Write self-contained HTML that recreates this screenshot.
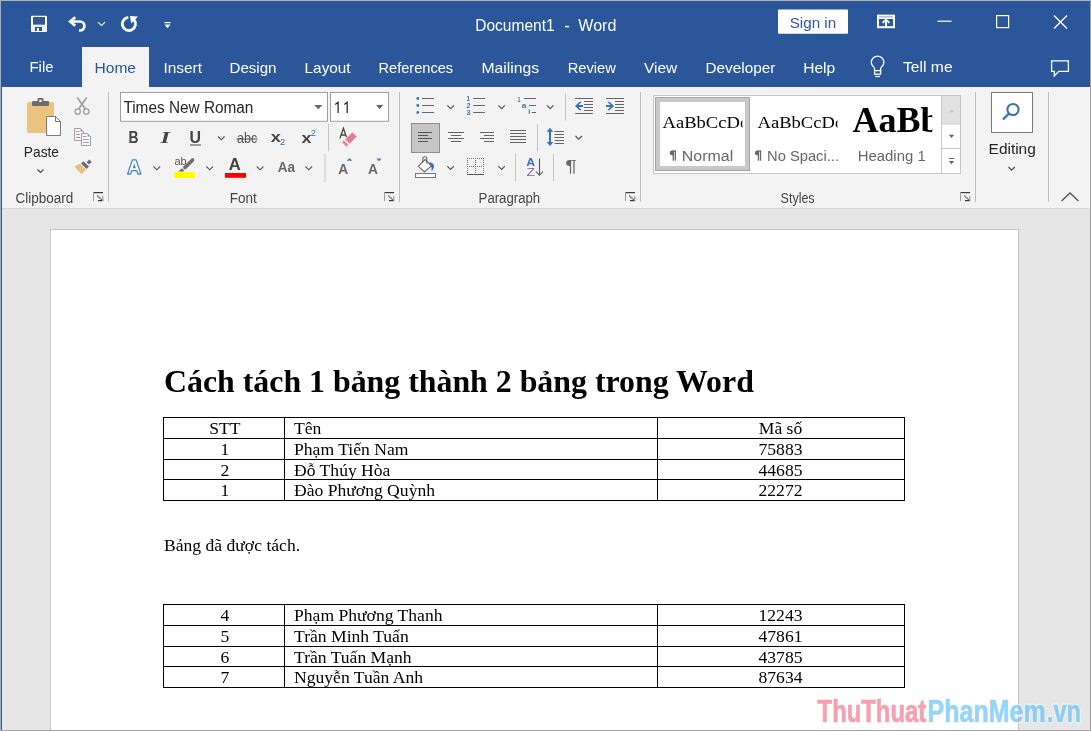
<!DOCTYPE html>
<html><head><meta charset="utf-8">
<style>
html,body{margin:0;padding:0;}
body{width:1091px;height:731px;position:relative;overflow:hidden;background:#e6e6e6;font-family:"Liberation Sans",sans-serif;}
.a{position:absolute;}
svg{position:absolute;left:0;top:0;will-change:transform;}
.ui{font-family:"Liberation Sans",sans-serif;}
.tnr{font-family:"Liberation Serif",serif;}
</style></head><body>
<div class="a" style="left:0;top:0;width:1091px;height:87px;background:#2b579a"></div>
<div class="a" style="left:82px;top:47px;width:67px;height:40px;background:#f3f3f3"></div>
<div class="a" style="left:0;top:87px;width:1091px;height:121px;background:#f3f3f3"></div>
<div class="a" style="left:0;top:208px;width:1091px;height:1px;background:#d6d6d6"></div>
<div class="a" style="left:50px;top:229px;width:967px;height:510px;background:#fff;border:1px solid #c6c6c6"></div>
<svg width="1091" height="731" viewBox="0 0 1091 731">
<!-- ===== TITLE BAR ===== -->
<!-- save -->
<rect x="31" y="15.7" width="16" height="16.3" rx="1" fill="#fff"/>
<rect x="33" y="17" width="12" height="7.8" fill="#2b579a"/>
<rect x="31.8" y="24.8" width="14.4" height="6.4" fill="#f0f0f0"/>
<rect x="35" y="27" width="7" height="4" fill="#2b579a"/>
<rect x="37" y="28" width="2" height="3" fill="#fff"/>
<!-- undo -->
<path d="M75.2 17.2 L70.2 21.5 L75.2 25.8" fill="none" stroke="#fff" stroke-width="2.7"/>
<path d="M70 21.5 H79.9 A4.5 4.5 0 0 1 79.9 30.5 H79" fill="none" stroke="#fff" stroke-width="2.7"/>
<path d="M98 22.2 L101.5 25.6 L105 22.2" fill="none" stroke="#fff" stroke-width="1.1"/>
<!-- redo/repeat -->
<path d="M128.3 17.3 A6.6 6.6 0 1 0 133.96 19.66" fill="none" stroke="#fff" stroke-width="2.8"/>
<path d="M130 15.9 L138 16.6 L131.2 23.6 Z" fill="#fff"/>
<!-- customize -->
<rect x="164.5" y="22" width="6" height="1.2" fill="#fff"/>
<path d="M164.5 24.5 H170.5 L167.5 28.2 Z" fill="#fff"/>
<g fill="#fff" class="ui">
 <text x="475.3" y="31" font-size="15.6" textLength="79.3" lengthAdjust="spacingAndGlyphs">Document1</text>
 <text x="564.2" y="31" font-size="15.6" textLength="5.6" lengthAdjust="spacingAndGlyphs">-</text>
 <text x="578.3" y="31" font-size="15.6" textLength="38" lengthAdjust="spacingAndGlyphs">Word</text>
</g>
<rect x="778" y="9.5" width="70" height="24.3" rx="1" fill="#fff"/>
<text x="789.7" y="28" font-size="15.5" fill="#2b579a" textLength="46.5" lengthAdjust="spacingAndGlyphs" class="ui">Sign in</text>
<!-- ribbon display options -->
<rect x="878" y="15.8" width="16" height="11.4" fill="none" stroke="#fff" stroke-width="2"/>
<rect x="877" y="14.8" width="18" height="4.2" fill="#fff"/>
<rect x="879" y="16.3" width="14" height="1.1" fill="#2b579a" opacity="0.5"/>
<path d="M882.6 22.9 L886 19.5 L889.4 22.9" stroke="#fff" stroke-width="1.7" fill="none"/>
<path d="M886 19.6 V26.8" stroke="#fff" stroke-width="2"/>
<!-- min max close -->
<rect x="937.5" y="20.6" width="14" height="1.2" fill="#fff"/>
<rect x="996.6" y="15.6" width="12" height="12" fill="none" stroke="#fff" stroke-width="1.2"/>
<path d="M1054 15.5 L1067 28.5 M1067 15.5 L1054 28.5" stroke="#fff" stroke-width="1.3"/>

<!-- ===== TABS ===== -->
<g font-size="15" class="ui" fill="#fff">
 <text x="29.5" y="72.2" textLength="24" lengthAdjust="spacingAndGlyphs">File</text>
 <text x="94.5" y="73" textLength="41.5" lengthAdjust="spacingAndGlyphs" fill="#2b579a">Home</text>
 <text x="163.5" y="73" textLength="38.5" lengthAdjust="spacingAndGlyphs">Insert</text>
 <text x="229.5" y="73" textLength="47" lengthAdjust="spacingAndGlyphs">Design</text>
 <text x="304.6" y="73" textLength="46" lengthAdjust="spacingAndGlyphs">Layout</text>
 <text x="378.5" y="73" textLength="74.6" lengthAdjust="spacingAndGlyphs">References</text>
 <text x="481.4" y="73" textLength="57.7" lengthAdjust="spacingAndGlyphs">Mailings</text>
 <text x="567.7" y="73" textLength="48.2" lengthAdjust="spacingAndGlyphs">Review</text>
 <text x="644" y="73" textLength="33.3" lengthAdjust="spacingAndGlyphs">View</text>
 <text x="705.4" y="73" textLength="70" lengthAdjust="spacingAndGlyphs">Developer</text>
 <text x="803.2" y="73" textLength="32" lengthAdjust="spacingAndGlyphs">Help</text>
 <text x="903" y="71.8" textLength="49.6" lengthAdjust="spacingAndGlyphs">Tell me</text>
</g>
<!-- lightbulb -->
<path d="M874.6 70.8 V68.8 C874.6 67.2 871.3 65.6 871.3 62.4 A6.3 6.3 0 0 1 883.9 62.4 C883.9 65.6 880.6 67.2 880.6 68.8 V70.8" fill="none" stroke="#fff" stroke-width="1.3"/>
<rect x="874.6" y="70.6" width="6" height="3.6" fill="none" stroke="#fff" stroke-width="1.3"/>
<rect x="875.3" y="75.9" width="4.6" height="1.2" fill="#fff"/>
<!-- comments -->
<path d="M1051.6 60.8 H1068.4 V71.3 H1058.8 L1054.3 76 V71.3 H1051.6 Z" fill="none" stroke="#fff" stroke-width="1.3"/>
<!-- ===== RIBBON ===== -->
<g fill="#bdbdbd">
 <rect x="108" y="92" width="1" height="110"/>
 <rect x="399" y="92" width="1" height="110"/>
 <rect x="640" y="92" width="1" height="110"/>
 <rect x="975" y="92" width="1" height="110"/>
 <rect x="1048" y="92" width="1" height="110"/>
</g>
<!-- group labels -->
<g font-size="14" class="ui" fill="#444">
 <text x="15.4" y="203" textLength="57.8" lengthAdjust="spacingAndGlyphs">Clipboard</text>
 <text x="229.7" y="203" textLength="27" lengthAdjust="spacingAndGlyphs">Font</text>
 <text x="478.6" y="203" textLength="61.6" lengthAdjust="spacingAndGlyphs">Paragraph</text>
 <text x="780.6" y="203" textLength="34" lengthAdjust="spacingAndGlyphs">Styles</text>
</g>
<!-- launchers -->
<g><rect x="93" y="192" width="10" height="1.2" fill="#3a3a3a"/><rect x="93" y="192" width="1" height="9" fill="#9a9a9a"/>
<path d="M97.3 195.6 L102.3 200.3" stroke="#333" stroke-width="1.2" stroke-dasharray="1.1 0.5"/>
<rect x="98" y="200" width="5" height="1.2" fill="#333"/><rect x="102.2" y="196" width="1.2" height="5" fill="#9a9a9a"/></g>
<g><rect x="384" y="192" width="10" height="1.2" fill="#3a3a3a"/><rect x="384" y="192" width="1" height="9" fill="#9a9a9a"/>
<path d="M388.3 195.6 L393.3 200.3" stroke="#333" stroke-width="1.2" stroke-dasharray="1.1 0.5"/>
<rect x="389" y="200" width="5" height="1.2" fill="#333"/><rect x="393.2" y="196" width="1.2" height="5" fill="#9a9a9a"/></g>
<g><rect x="625" y="192" width="10" height="1.2" fill="#3a3a3a"/><rect x="625" y="192" width="1" height="9" fill="#9a9a9a"/>
<path d="M629.3 195.6 L634.3 200.3" stroke="#333" stroke-width="1.2" stroke-dasharray="1.1 0.5"/>
<rect x="630" y="200" width="5" height="1.2" fill="#333"/><rect x="634.2" y="196" width="1.2" height="5" fill="#9a9a9a"/></g>
<g><rect x="960" y="192" width="10" height="1.2" fill="#3a3a3a"/><rect x="960" y="192" width="1" height="9" fill="#9a9a9a"/>
<path d="M964.3 195.6 L969.3 200.3" stroke="#333" stroke-width="1.2" stroke-dasharray="1.1 0.5"/>
<rect x="965" y="200" width="5" height="1.2" fill="#333"/><rect x="969.2" y="196" width="1.2" height="5" fill="#9a9a9a"/></g>
<!-- collapse chevron -->
<path d="M1061.5 201 L1070 193 L1078.5 201" fill="none" stroke="#555" stroke-width="1.3"/>

<!-- Clipboard group -->
<rect x="27" y="102" width="27" height="31" rx="1.5" fill="#ebc37e"/>
<rect x="32" y="101" width="17" height="5" rx="1" fill="#6d6d6d"/>
<rect x="37.5" y="98" width="6" height="5" rx="1" fill="#6d6d6d"/>
<rect x="39.3" y="99.8" width="2.4" height="2.2" fill="#f3f3f3"/>
<path d="M46.5 116.5 H55.5 L60.5 121.5 V135.5 H46.5 Z" fill="#fff" stroke="#7a7a7a" stroke-width="1"/>
<path d="M55.5 116.5 V121.5 H60.5" fill="none" stroke="#7a7a7a" stroke-width="1"/>
<text x="23.8" y="157" font-size="15" class="ui" fill="#262626" textLength="35.2" lengthAdjust="spacingAndGlyphs">Paste</text>
<path d="M37.5 169.5 L40.5 172.5 L43.5 169.5" fill="none" stroke="#444" stroke-width="1.1"/>
<!-- scissors -->
<g fill="none" stroke="#9e9e9e">
 <path d="M77.3 97.5 L85.5 109.2 M86.7 97.5 L78.5 109.2" stroke-width="1.7"/>
 <circle cx="77.7" cy="111.6" r="2.7" stroke-width="1.3"/>
 <circle cx="86.3" cy="111.6" r="2.7" stroke-width="1.3"/>
</g>
<!-- copy -->
<g fill="#fbf7fb" stroke="#a29ea2" stroke-width="1">
 <path d="M74.5 128.5 H80.5 L83.5 131.5 V140.5 H74.5 Z"/>
 <path d="M81.5 133.5 H87.5 L90.5 136.5 V145.5 H81.5 Z"/>
</g>
<path d="M80.5 128.5 L83.5 131.5 H80.5 Z M87.5 133.5 L90.5 136.5 H87.5 Z" fill="#a29ea2"/>
<g stroke="#a29ea2" stroke-width="1">
 <path d="M76 131.5 H79.5 M76 134.5 H80 M76 137.5 H80 M83 136.5 H86.5 M83 139.5 H89 M83 142.5 H89"/>
</g>
<!-- format painter -->
<path d="M74.4 166.4 L79.9 163.8 L86 169.7 L81.5 174.3 Z" fill="#e8c079"/>
<path d="M81 163.4 L83.4 161.2 L89 166.6 L86.6 169 Z" fill="#6d6d6d"/>
<path d="M86.6 162.2 L89.2 159.5 L91.8 161.9 L89 164.5 Z" fill="#6d6d6d"/>

<!-- Font group -->
<rect x="120.5" y="92.5" width="207" height="28.8" fill="#fff" stroke="#9e9e9e"/>
<text x="123.4" y="112.5" font-size="15.6" class="ui" fill="#262626" textLength="130" lengthAdjust="spacingAndGlyphs">Times New Roman</text>
<path d="M314.2 105 H322.4 L318.3 109.2 Z" fill="#666"/>
<rect x="330.5" y="92.5" width="58" height="28.8" fill="#fff" stroke="#9e9e9e"/>
<path d="M335.2 104.5 L338.1 102.3 V112.9 M344.3 104.5 L347.2 102.3 V112.9" stroke="#262626" stroke-width="1.25" fill="none"/>
<path d="M376 105 H383.2 L379.6 109.2 Z" fill="#666"/>

<g class="ui" fill="#444">
 <text x="128.4" y="143.1" font-size="16.5" font-weight="bold" textLength="10" lengthAdjust="spacingAndGlyphs">B</text>
 <text x="160.5" y="143.1" font-size="16.5" font-style="italic" font-family="Liberation Serif" font-weight="bold" textLength="9.5" lengthAdjust="spacingAndGlyphs">I</text>
 <text x="189.5" y="143.1" font-size="16.5" font-weight="bold" textLength="11.5" lengthAdjust="spacingAndGlyphs">U</text>
 <rect x="190" y="144.5" width="11" height="1" fill="#444"/>
 <text x="237" y="143.2" font-size="14" textLength="20.2" lengthAdjust="spacingAndGlyphs" fill="#555">abc</text>
 <rect x="236.5" y="138.5" width="21" height="1" fill="#555"/>
 <text x="270.8" y="142.2" font-size="15" font-weight="bold" textLength="10" lengthAdjust="spacingAndGlyphs">x</text>
 <text x="280" y="144.6" font-size="9" textLength="5.2" lengthAdjust="spacingAndGlyphs" fill="#2e75b6">2</text>
 <text x="301.5" y="142.7" font-size="15" font-weight="bold" textLength="10" lengthAdjust="spacingAndGlyphs">x</text>
 <text x="310.8" y="135.5" font-size="9" textLength="5.2" lengthAdjust="spacingAndGlyphs" fill="#2e75b6">2</text>
</g>
<g fill="none" stroke="#555" stroke-width="1.1">
 <path d="M218 136.5 L221.3 139.8 L224.6 136.5"/>
 <path d="M153.5 166.5 L156.8 169.8 L160.1 166.5"/>
 <path d="M206.4 166.5 L209.7 169.8 L213 166.5"/>
 <path d="M256.8 166.5 L260.1 169.8 L263.4 166.5"/>
 <path d="M305.4 166.5 L308.7 169.8 L312 166.5"/>
</g>
<rect x="328" y="124" width="1" height="27.5" fill="#c6c6c6"/>
<rect x="324.5" y="154" width="1" height="28" fill="#c6c6c6"/>
<!-- clear formatting -->
<path d="M339.9 138.4 L343.4 128.2 L346.9 138.4 M341.2 135 H345.6" fill="none" stroke="#444" stroke-width="1.3"/>
<path d="M352.4 131.8 L357.2 136.6 L349.6 144.2 L344.8 139.4 Z" fill="#e47f93" stroke="#fff" stroke-width="0.8" stroke-linejoin="round"/>
<path d="M343.8 140.4 L348.4 145 L346.6 146.8 L342 142.2 Z" fill="#e47f93" stroke-linejoin="round"/>
<!-- text effects A -->
<path d="M127.6 174 L132.4 159.9 H136.1 L140.9 174 H137.9 L136.8 170.7 H131.7 L130.6 174 Z" fill="#fff" stroke="#4a86cf" stroke-width="1.3" stroke-linejoin="round"/>
<path d="M132.7 168.2 L134.25 163.2 L135.8 168.2 Z" fill="#4a86cf"/>
<!-- highlight -->
<text x="174.5" y="164.7" font-size="10.5" class="ui" fill="#555" textLength="12.2" lengthAdjust="spacingAndGlyphs">ab</text>
<path d="M192.6 160 L185 167.6" stroke="#6d6d6d" stroke-width="3.6" stroke-linecap="round"/>
<path d="M178.3 171.6 L182 168.3 L184.2 170.4 L183.2 171.6 Z" fill="#6d6d6d"/>
<rect x="174" y="172" width="21" height="6" fill="#ffff00"/>
<!-- font color -->
<text x="228.8" y="170.3" font-size="16.5" font-weight="bold" class="ui" fill="#444" textLength="12" lengthAdjust="spacingAndGlyphs">A</text>
<rect x="225" y="173" width="21" height="4.8" fill="#ff0000"/>
<!-- Aa -->
<text x="277.8" y="172.2" font-size="15" font-weight="bold" class="ui" fill="#6a6a6a" textLength="17.3" lengthAdjust="spacingAndGlyphs">Aa</text>
<!-- grow/shrink -->
<text x="338.2" y="173.5" font-size="14" font-weight="bold" class="ui" fill="#6a6a6a" textLength="10" lengthAdjust="spacingAndGlyphs">A</text>
<path d="M346.7 160.7 L349.5 158 L352.3 160.7 Z" fill="#3d7cc9"/>
<text x="368.1" y="173.5" font-size="14" font-weight="bold" class="ui" fill="#6a6a6a" textLength="10" lengthAdjust="spacingAndGlyphs">A</text>
<path d="M376.4 158.5 H381.6 L379 161.2 Z" fill="#3d7cc9"/>

<!-- Paragraph group -->
<g fill="#3a72b8">
 <circle cx="417.8" cy="98.5" r="1.4"/><circle cx="417.8" cy="105.5" r="1.4"/><circle cx="417.8" cy="112.5" r="1.4"/>
</g>
<g stroke="#666" stroke-width="1">
 <path d="M422 98.5 H434 M422 105.5 H434 M422 112.5 H434"/>
 <path d="M473.2 98.5 H485 M473.2 105.5 H485 M473.2 112.5 H485"/>
 <path d="M524 98.5 H536 M529 105.5 H536 M531.7 112.5 H536"/>
</g>
<g class="ui" fill="#3a72b8" font-weight="bold" font-size="7">
 <text x="466.6" y="101.2" textLength="3.6" lengthAdjust="spacingAndGlyphs">1</text>
 <text x="466.4" y="108.2" textLength="4" lengthAdjust="spacingAndGlyphs">2</text>
 <text x="466.4" y="115.2" textLength="4" lengthAdjust="spacingAndGlyphs">3</text>
 <text x="517.6" y="102" textLength="3" lengthAdjust="spacingAndGlyphs">1</text>
 <text x="521.8" y="108" font-size="8" textLength="4.6" lengthAdjust="spacingAndGlyphs">a</text>
 <text x="528.3" y="114.2" font-size="7.5" textLength="2" lengthAdjust="spacingAndGlyphs">i</text>
</g>
<g fill="none" stroke="#555" stroke-width="1.2">
 <path d="M447.3 105.3 L450.6 108.6 L453.9 105.3"/>
 <path d="M498.3 105.3 L501.6 108.6 L504.9 105.3"/>
 <path d="M546.9 105.3 L550.2 108.6 L553.5 105.3"/>
 <path d="M575.5 136 L578.7 139.2 L581.9 136"/>
 <path d="M447.3 166.2 L450.6 169.5 L453.9 166.2"/>
 <path d="M498.3 166.2 L501.6 169.5 L504.9 166.2"/>
</g>
<rect x="565" y="93.5" width="1" height="27" fill="#c6c6c6"/>
<!-- indents -->
<g stroke="#666" stroke-width="1">
 <path d="M575 98.5 H593 M584 101.5 H593 M584 104.5 H593 M584 107.5 H593 M584 110.5 H593 M575 113.5 H593"/>
 <path d="M606 98.5 H624 M615 101.5 H624 M615 104.5 H624 M615 107.5 H624 M615 110.5 H624 M606 113.5 H624"/>
</g>
<path d="M575 106 L579.6 101.8 H581.8 L578.6 105 H583 V107 H578.6 L581.8 110.2 H579.6 Z" fill="#3a72b8"/>
<path d="M614 106 L609.4 101.8 H607.2 L610.4 105 H606 V107 H610.4 L607.2 110.2 H609.4 Z" fill="#3a72b8"/>
<!-- align -->
<rect x="411.5" y="123.5" width="28" height="29" fill="#c6c6c6" stroke="#8f8f8f"/>
<g stroke="#555" stroke-width="1">
 <path d="M418 132.5 H432 M418 135.5 H428 M418 138.5 H432 M418 141.5 H428"/>
</g>
<g stroke="#666" stroke-width="1">
 <path d="M448 132.5 H464 M451 135.5 H461 M448 138.5 H464 M451 141.5 H461"/>
 <path d="M480 132.5 H494 M484 135.5 H494 M480 138.5 H494 M484 141.5 H494"/>
 <path d="M510 130.5 H526 M510 133.5 H526 M510 136.5 H526 M510 139.5 H526 M510 142.5 H526"/>
</g>
<rect x="537" y="124" width="1" height="27.5" fill="#c6c6c6"/>
<!-- line spacing -->
<g stroke="#666" stroke-width="1">
 <path d="M554.5 131.5 H564 M554.5 134.5 H564 M554.5 137.5 H564 M554.5 140.5 H564 M554.5 143.5 H564"/>
</g>
<path d="M550 127.8 L546.6 131.8 H549 V142 H546.6 L550 146 L553.4 142 H551 V131.8 H553.4 Z" fill="#3a72b8"/>
<!-- shading -->
<path d="M418.3 166.3 L425 159.5 L431.3 165.8 L424.5 172 Z" fill="#fff" stroke="#666" stroke-width="1.1"/>
<path d="M422.8 162.5 V158.8 A2 2 0 0 1 426.8 158.8 V163.5" fill="none" stroke="#666" stroke-width="1.1"/>
<path d="M429.2 162 C432.5 162.5 434.5 164.5 434 167 C433.7 169 432.5 170.2 431.6 171.6 C431.8 169 431.6 166.5 429.2 162 Z" fill="#3a72b8"/>
<rect x="415.5" y="173.5" width="20" height="4" fill="#fff" stroke="#777"/>
<!-- borders -->
<g fill="#777">
<rect x="467" y="158" width="1" height="1"/>
<rect x="467" y="166" width="1" height="1"/>
<rect x="469" y="158" width="1" height="1"/>
<rect x="469" y="166" width="1" height="1"/>
<rect x="471" y="158" width="1" height="1"/>
<rect x="471" y="166" width="1" height="1"/>
<rect x="473" y="158" width="1" height="1"/>
<rect x="473" y="166" width="1" height="1"/>
<rect x="475" y="158" width="1" height="1"/>
<rect x="475" y="166" width="1" height="1"/>
<rect x="477" y="158" width="1" height="1"/>
<rect x="477" y="166" width="1" height="1"/>
<rect x="479" y="158" width="1" height="1"/>
<rect x="479" y="166" width="1" height="1"/>
<rect x="481" y="158" width="1" height="1"/>
<rect x="481" y="166" width="1" height="1"/>
<rect x="483" y="158" width="1" height="1"/>
<rect x="483" y="166" width="1" height="1"/>
<rect x="467" y="158" width="1" height="1"/>
<rect x="475" y="158" width="1" height="1"/>
<rect x="483" y="158" width="1" height="1"/>
<rect x="467" y="160" width="1" height="1"/>
<rect x="475" y="160" width="1" height="1"/>
<rect x="483" y="160" width="1" height="1"/>
<rect x="467" y="162" width="1" height="1"/>
<rect x="475" y="162" width="1" height="1"/>
<rect x="483" y="162" width="1" height="1"/>
<rect x="467" y="164" width="1" height="1"/>
<rect x="475" y="164" width="1" height="1"/>
<rect x="483" y="164" width="1" height="1"/>
<rect x="467" y="166" width="1" height="1"/>
<rect x="475" y="166" width="1" height="1"/>
<rect x="483" y="166" width="1" height="1"/>
<rect x="467" y="168" width="1" height="1"/>
<rect x="475" y="168" width="1" height="1"/>
<rect x="483" y="168" width="1" height="1"/>
<rect x="467" y="170" width="1" height="1"/>
<rect x="475" y="170" width="1" height="1"/>
<rect x="483" y="170" width="1" height="1"/>
<rect x="467" y="172" width="1" height="1"/>
<rect x="475" y="172" width="1" height="1"/>
<rect x="483" y="172" width="1" height="1"/>
<rect x="467" y="174" width="1" height="1"/>
<rect x="475" y="174" width="1" height="1"/>
<rect x="483" y="174" width="1" height="1"/>
</g>
<rect x="467" y="174" width="17" height="1" fill="#555"/>
<rect x="515" y="153.5" width="1" height="27.5" fill="#c6c6c6"/>
<!-- sort -->
<text x="526.2" y="166.3" font-size="10.5" font-weight="bold" class="ui" fill="#3a72b8" textLength="8.8" lengthAdjust="spacingAndGlyphs">A</text>
<text x="526.4" y="176.3" font-size="10.5" class="ui" fill="#8e5cbf" textLength="8.6" lengthAdjust="spacingAndGlyphs">Z</text>
<path d="M539.5 158.5 V175 M536 171.5 L539.5 175.3 L543 171.5" fill="none" stroke="#555" stroke-width="1.1"/>
<rect x="553" y="153.5" width="1" height="27.5" fill="#c6c6c6"/>
<!-- pilcrow -->
<text x="565.3" y="172.2" font-size="16" class="ui" fill="#666" textLength="11.6" lengthAdjust="spacingAndGlyphs">¶</text>

<!-- Styles group -->
<rect x="653.5" y="95.5" width="307" height="78" fill="#fff" stroke="#c6c6c6"/>
<rect x="655.5" y="97.5" width="94" height="73" fill="#fff" stroke="#a5a5a5"/>
<rect x="658" y="100" width="89" height="68" fill="none" stroke="#c9c9c9" stroke-width="4"/>
<defs>
 <clipPath id="c1"><rect x="660" y="100" width="82.5" height="40"/></clipPath>
 <clipPath id="c2"><rect x="752" y="100" width="85.5" height="40"/></clipPath>
 <clipPath id="c3"><rect x="845" y="98" width="87.3" height="45"/></clipPath>
</defs>
<g class="tnr" fill="#000" font-size="17.5">
 <text x="662.5" y="127.9" clip-path="url(#c1)" textLength="86.7" lengthAdjust="spacingAndGlyphs">AaBbCcDd</text>
 <text x="757.5" y="127.9" clip-path="url(#c2)" textLength="86.7" lengthAdjust="spacingAndGlyphs">AaBbCcDd</text>
</g>
<text x="852.6" y="131.9" font-size="36" font-weight="bold" class="tnr" fill="#000" clip-path="url(#c3)">AaBb</text>
<path d="M673.3000000000001 150.6 H672.1 A2.3 2.3 0 0 0 672.1 155.3 H673.3000000000001 Z" fill="#666"/><rect x="672.6" y="150.6" width="1.3" height="10.1" fill="#666"/><rect x="674.7" y="150.6" width="1.3" height="10.1" fill="#666"/><rect x="672.1" y="150.6" width="3.9" height="1.1" fill="#666"/>
<path d="M758.5 150.6 H757.3 A2.3 2.3 0 0 0 757.3 155.3 H758.5 Z" fill="#666"/><rect x="757.8" y="150.6" width="1.3" height="10.1" fill="#666"/><rect x="759.9" y="150.6" width="1.3" height="10.1" fill="#666"/><rect x="757.3" y="150.6" width="3.9" height="1.1" fill="#666"/>
<g class="ui" fill="#666" font-size="15.4">
 <text x="681.8" y="160.8" textLength="51.4" lengthAdjust="spacingAndGlyphs">Normal</text>
 <text x="767" y="160.8" textLength="72" lengthAdjust="spacingAndGlyphs">No Spaci...</text>
 <text x="857.7" y="160.9" textLength="68" lengthAdjust="spacingAndGlyphs">Heading 1</text>
</g>
<rect x="941.5" y="95.5" width="19" height="78" fill="#fff" stroke="#c6c6c6"/>
<rect x="942" y="96" width="18" height="27.5" fill="#e1e1e1"/>
<rect x="941.5" y="123.5" width="19" height="1" fill="#c6c6c6"/>
<rect x="941.5" y="148" width="19" height="1" fill="#c6c6c6"/>
<path d="M948.8 112.2 H954.2 L951.5 109.2 Z" fill="#c6c6c6"/>
<path d="M948.8 134.8 H954.2 L951.5 138 Z" fill="#666"/>
<rect x="948.8" y="158" width="5.4" height="1" fill="#666"/>
<path d="M948.8 161 H954.2 L951.5 164.2 Z" fill="#666"/>

<!-- Editing group -->
<rect x="991.5" y="92.5" width="41" height="40" fill="#fff" stroke="#7a7a7a"/>
<circle cx="1013" cy="109.5" r="5.6" fill="none" stroke="#3a70b4" stroke-width="2"/>
<path d="M1009 113.5 L1003 119.5" stroke="#3a70b4" stroke-width="2.4"/>
<text x="988.6" y="153.8" font-size="15" class="ui" fill="#262626" textLength="47.2" lengthAdjust="spacingAndGlyphs">Editing</text>
<path d="M1008.5 167 L1011.6 170.1 L1014.7 167" fill="none" stroke="#444" stroke-width="1.1"/>
<!-- ===== DOCUMENT ===== -->
<text x="164" y="392" font-size="31.85" font-weight="bold" class="tnr" fill="#000">Cách tách 1 bảng thành 2 bảng trong Word</text>
<g class="tnr" font-size="17.6" fill="#000">
<rect x="163" y="417" width="742" height="1" fill="#000"/>
<rect x="163" y="438" width="742" height="1" fill="#000"/>
<rect x="163" y="459" width="742" height="1" fill="#000"/>
<rect x="163" y="479" width="742" height="1" fill="#000"/>
<rect x="163" y="500" width="742" height="1" fill="#000"/>
<rect x="163" y="417" width="1" height="84" fill="#000"/>
<rect x="284" y="417" width="1" height="84" fill="#000"/>
<rect x="657" y="417" width="1" height="84" fill="#000"/>
<rect x="904" y="417" width="1" height="84" fill="#000"/>
<text x="224.8" y="434.0" text-anchor="middle">STT</text>
<text x="294" y="434.0">Tên</text>
<text x="780.5" y="434.0" text-anchor="middle">Mã số</text>
<text x="224.8" y="454.8" text-anchor="middle">1</text>
<text x="294" y="454.8">Phạm Tiến Nam</text>
<text x="780.5" y="454.8" text-anchor="middle">75883</text>
<text x="224.8" y="475.5" text-anchor="middle">2</text>
<text x="294" y="475.5">Đỗ Thúy Hòa</text>
<text x="780.5" y="475.5" text-anchor="middle">44685</text>
<text x="224.8" y="496.2" text-anchor="middle">1</text>
<text x="294" y="496.2">Đào Phương Quỳnh</text>
<text x="780.5" y="496.2" text-anchor="middle">22272</text>
<text x="164" y="551.4">Bảng đã được tách.</text>
<rect x="163" y="604" width="742" height="1" fill="#000"/>
<rect x="163" y="625" width="742" height="1" fill="#000"/>
<rect x="163" y="646" width="742" height="1" fill="#000"/>
<rect x="163" y="666" width="742" height="1" fill="#000"/>
<rect x="163" y="687" width="742" height="1" fill="#000"/>
<rect x="163" y="604" width="1" height="84" fill="#000"/>
<rect x="284" y="604" width="1" height="84" fill="#000"/>
<rect x="657" y="604" width="1" height="84" fill="#000"/>
<rect x="904" y="604" width="1" height="84" fill="#000"/>
<text x="224.8" y="621.0" text-anchor="middle">4</text>
<text x="294" y="621.0">Phạm Phương Thanh</text>
<text x="780.5" y="621.0" text-anchor="middle">12243</text>
<text x="224.8" y="641.8" text-anchor="middle">5</text>
<text x="294" y="641.8">Trần Minh Tuấn</text>
<text x="780.5" y="641.8" text-anchor="middle">47861</text>
<text x="224.8" y="662.5" text-anchor="middle">6</text>
<text x="294" y="662.5">Trần Tuấn Mạnh</text>
<text x="780.5" y="662.5" text-anchor="middle">43785</text>
<text x="224.8" y="683.2" text-anchor="middle">7</text>
<text x="294" y="683.2">Nguyễn Tuần Anh</text>
<text x="780.5" y="683.2" text-anchor="middle">87634</text>
</g>
<!-- watermark -->
<g font-family="Liberation Sans" font-weight="bold" font-size="31">
<g fill="none" stroke="#fff" stroke-width="3" stroke-opacity="0.5" stroke-linejoin="round">
<text x="817.6" y="722" textLength="108.6" lengthAdjust="spacingAndGlyphs">ThuThuat</text>
<text x="927.6" y="722" textLength="118" lengthAdjust="spacingAndGlyphs">PhanMem</text>
<text x="1047" y="722" textLength="34" lengthAdjust="spacingAndGlyphs">.vn</text>
</g>
<g stroke-width="0.7" opacity="0.5">
<text x="817.6" y="722" fill="#ed4161" stroke="#ed4161" textLength="108.6" lengthAdjust="spacingAndGlyphs">ThuThuat</text>
<text x="927.6" y="722" fill="#2eaaf0" stroke="#2eaaf0" textLength="118" lengthAdjust="spacingAndGlyphs">PhanMem</text>
<text x="1047" y="722" fill="#2eaaf0" stroke="#2eaaf0" textLength="34" lengthAdjust="spacingAndGlyphs">.vn</text>
</g>
</g>
</svg>
<!-- frame borders -->
<div class="a" style="left:0;top:0;width:1091px;height:1px;background:#b4b0ab"></div>
<div class="a" style="left:0;top:0;width:1px;height:731px;background:#b0aca8"></div>
<div class="a" style="left:1090px;top:0;width:1px;height:731px;background:#a09d9a"></div>
<div class="a" style="left:0;top:730px;width:1091px;height:1px;background:#a5a5a5"></div>
<div class="a" style="left:1px;top:87px;width:1px;height:643px;background:#2b579a"></div>
</body></html>
